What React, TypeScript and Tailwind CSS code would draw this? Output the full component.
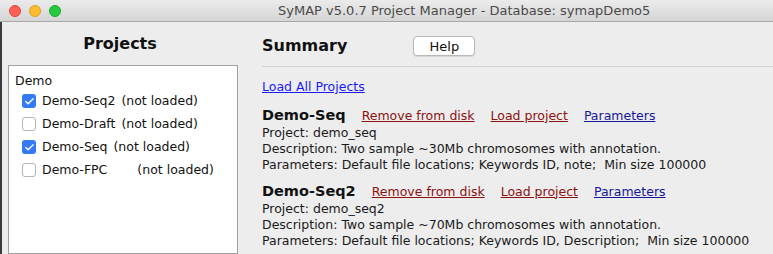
import { Check } from "lucide-react";

const FONT = { fontFamily: '"DejaVu Sans", Verdana, sans-serif' };

function Box({ on }: { on: boolean }) {
  return on ? (
    <span className="flex h-[14px] w-[14px] items-center justify-center rounded-[3px] bg-[#3479f6]">
      <Check className="h-[11px] w-[11px] text-white" strokeWidth={3} />
    </span>
  ) : (
    <span className="h-[14px] w-[14px] rounded-[3px] border border-[#b5b5b5] bg-white" />
  );
}

const rows = [
  { name: "Demo-Seq2", on: true },
  { name: "Demo-Draft", on: false },
  { name: "Demo-Seq", on: true },
  { name: "Demo-FPC", on: false, pad: true },
];

function ProjectBlock({
  name,
  id,
  desc,
  params,
}: {
  name: string;
  id: string;
  desc: string;
  params: string;
}) {
  return (
    <div>
      <div className="flex h-[19px] items-baseline leading-[19px]">
        <span className="mr-[16px] text-[14.5px] font-bold text-[#111]">{name}</span>
        <a className="text-[#8c1111] underline">Remove from disk</a>
        <a className="ml-[16px] text-[#8c1111] underline">Load project</a>
        <a className="ml-[16px] text-[#16169a] underline">Parameters</a>
      </div>
      <div className="leading-[16px] text-[#1a1a1a]">
        <div>Project: {id}</div>
        <div>Description: {desc}</div>
        <div className="whitespace-pre">Parameters: {params}</div>
      </div>
    </div>
  );
}

export default function App() {
  return (
    <div
      style={FONT}
      className="flex h-[254px] w-[773px] flex-col overflow-hidden bg-[#ededed] text-[12.5px]"
    >
      <div className="relative flex h-[22px] shrink-0 items-center border-b border-[#a8a8a8] bg-gradient-to-b from-[#ebebeb] to-[#d5d5d5]">
        <div className="flex gap-[8px] pl-[9px]">
          <span className="h-[12px] w-[12px] rounded-full border border-[#e0443e] bg-[#fe5f57]" />
          <span className="h-[12px] w-[12px] rounded-full border border-[#dea123] bg-[#febc2e]" />
          <span className="h-[12px] w-[12px] rounded-full border border-[#1aab29] bg-[#28c840]" />
        </div>
        <span className="ml-[217px] text-[13px] text-[#4a4a4a]">
          SyMAP v5.0.7 Project Manager - Database: symapDemo5
        </span>
      </div>

      <div className="flex min-h-0 flex-1">
        <div className="flex w-[238px] shrink-0 flex-col border-l-2 border-[#3c3c3c]">
          <h1 className="mt-[12px] text-center text-[16px] font-bold leading-[20px] text-[#111]">
            Projects
          </h1>
          <div className="ml-[6px] mt-[11px] flex-1 border border-[#a0a0a0] bg-white pl-[6px] pt-[7px] text-[#111]">
            <div className="leading-[16px]">Demo</div>
            <div className="mt-[4px] flex flex-col gap-[7px] pl-[7px]">
              {rows.map((r) => (
                <div key={r.name} className="flex items-center gap-[6px] leading-[16px]">
                  <Box on={r.on} />
                  <span>{r.name}</span>
                  <span className={r.pad ? "ml-[24px]" : ""}>(not loaded)</span>
                </div>
              ))}
            </div>
          </div>
        </div>

        <div className="flex-1 pl-[24px]">
          <div className="mt-[14px] flex items-center">
            <h2 className="text-[16px] font-bold leading-[20px] text-[#111]">Summary</h2>
            <button className="ml-[66px] h-[20px] w-[62px] rounded-[4px] border border-[#b8b8b8] bg-white text-[13px] text-[#111] shadow-[0_1px_1px_rgba(0,0,0,0.1)]">
              Help
            </button>
          </div>
          <div className="mt-[10px] h-px bg-[#d0d0d0]" />
          <a className="mt-[12px] inline-block leading-[16px] text-[#1a1af5] underline">
            Load All Projects
          </a>
          <div className="mt-[9px] flex flex-col gap-[9px]">
            <ProjectBlock
              name="Demo-Seq"
              id="demo_seq"
              desc="Two sample ~30Mb chromosomes with annotation."
              params="Default file locations; Keywords ID, note;  Min size 100000"
            />
            <ProjectBlock
              name="Demo-Seq2"
              id="demo_seq2"
              desc="Two sample ~70Mb chromosomes with annotation."
              params="Default file locations; Keywords ID, Description;  Min size 100000"
            />
          </div>
        </div>
      </div>
    </div>
  );
}
